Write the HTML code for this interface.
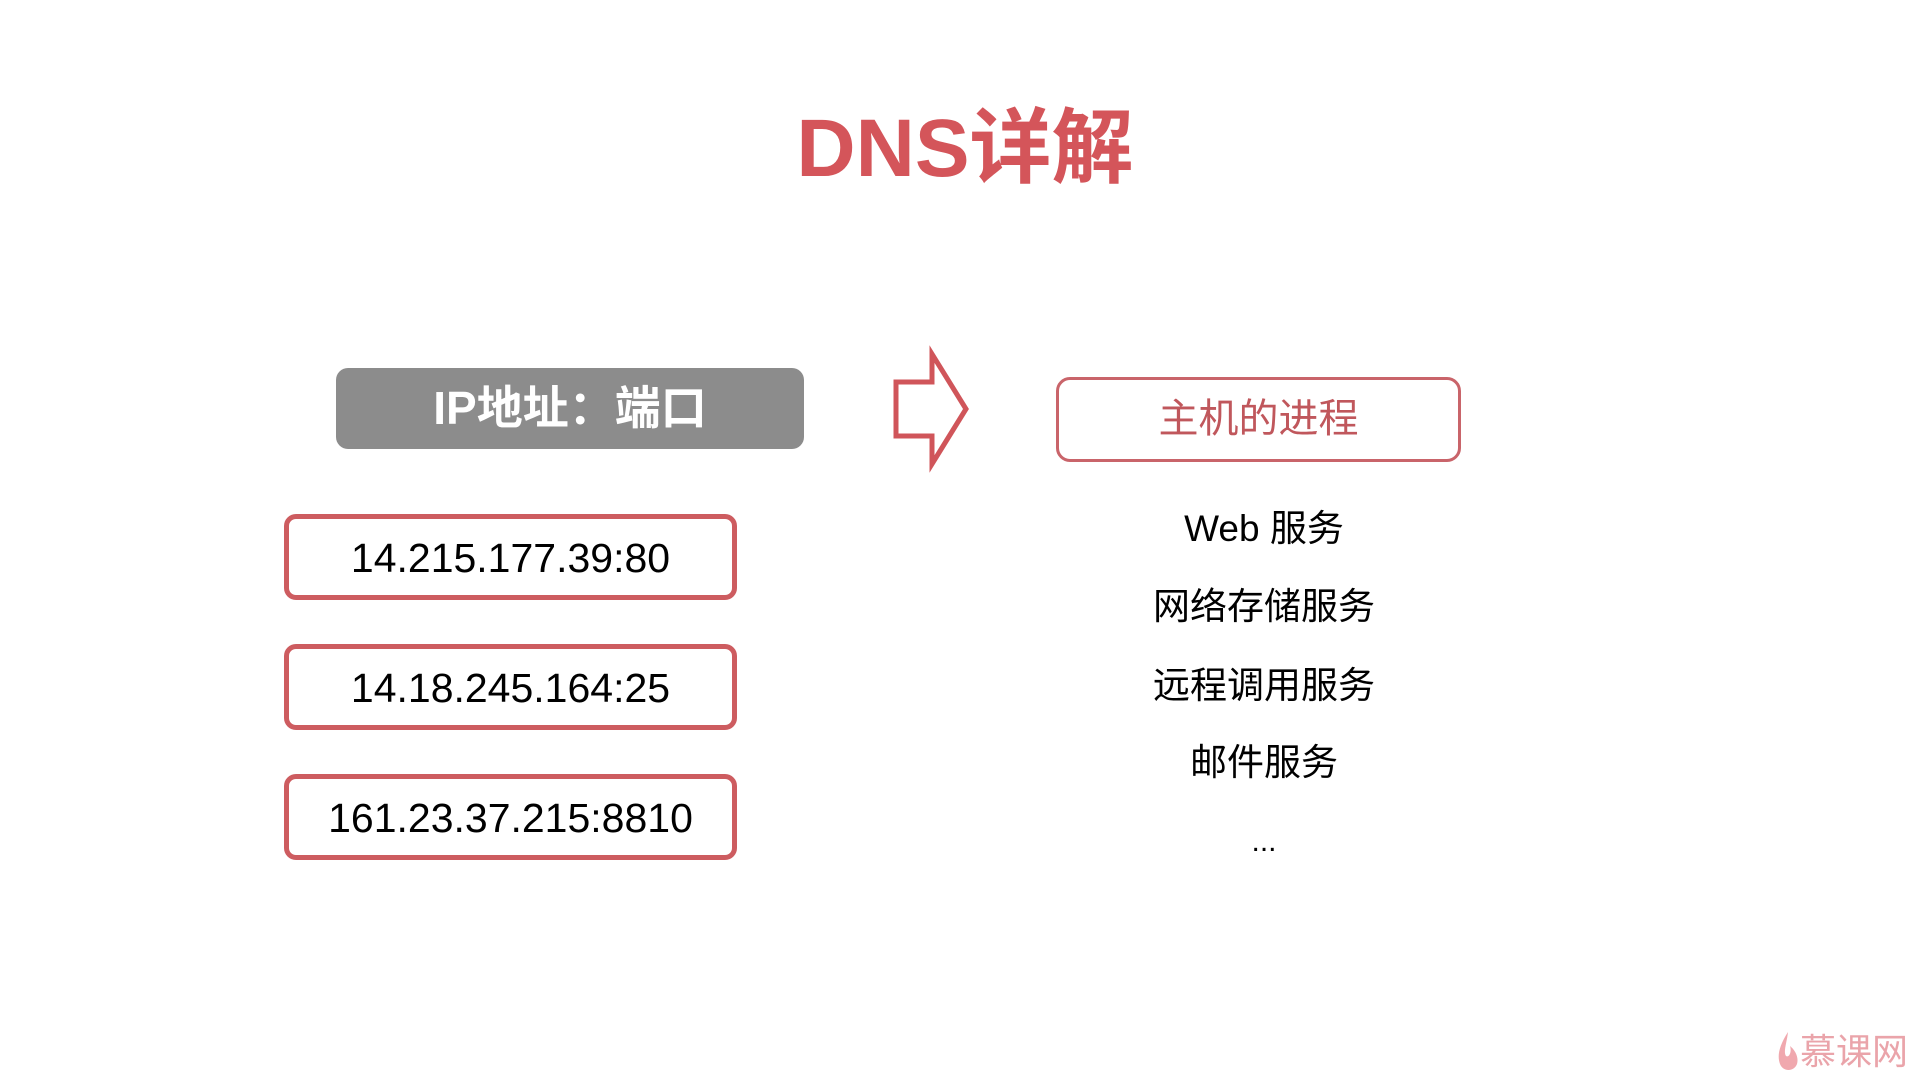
<!DOCTYPE html>
<html><head><meta charset="utf-8"><style>
body{margin:0;width:1920px;height:1080px;background:#fff;position:relative;overflow:hidden;font-family:"Liberation Sans","Noto Sans CJK SC",sans-serif}
.a{position:absolute;box-sizing:border-box}
</style></head><body>
<div class="a" style="left:780px;top:94px;width:370px;height:110px;text-align:center;font-size:82px;font-weight:bold;color:#d4555a;line-height:110px">DNS详解</div>
<div class="a" style="left:336px;top:368px;width:468px;height:81px;background:#8c8c8c;border-radius:12px;color:#fff;font-weight:bold;font-size:46px;text-align:center;line-height:81px">IP地址：端口</div>
<svg class="a" style="left:880px;top:340px" width="100" height="140"><path d="M16 42 H52 V14 L86 69 L52 124 V96 H16 Z" fill="none" stroke="#d0555a" stroke-width="5"/></svg>
<div class="a" style="left:1056px;top:377px;width:405px;height:85px;border:3px solid #c9646a;border-radius:14px;color:#c0575c;font-size:40px;text-align:center;line-height:79px">主机的进程</div>
<div class="a" style="left:284px;top:514px;width:453px;height:86px;border:5px solid #cd5c60;border-radius:12px;font-size:41px;text-align:center;line-height:78px">14.215.177.39:80</div>
<div class="a" style="left:284px;top:644px;width:453px;height:86px;border:5px solid #cd5c60;border-radius:12px;font-size:41px;text-align:center;line-height:78px">14.18.245.164:25</div>
<div class="a" style="left:284px;top:774px;width:453px;height:86px;border:5px solid #cd5c60;border-radius:12px;font-size:41px;text-align:center;line-height:78px">161.23.37.215:8810</div>
<div class="a" style="left:1064px;top:505px;width:400px;text-align:center;font-size:37px;line-height:48px">Web 服务</div>
<div class="a" style="left:1064px;top:583px;width:400px;text-align:center;font-size:37px;line-height:48px">网络存储服务</div>
<div class="a" style="left:1064px;top:662px;width:400px;text-align:center;font-size:37px;line-height:48px">远程调用服务</div>
<div class="a" style="left:1064px;top:739px;width:400px;text-align:center;font-size:37px;line-height:48px">邮件服务</div>
<div class="a" style="left:1064px;top:818px;width:400px;text-align:center;font-size:30px;line-height:48px">...</div>
<svg class="a" style="left:1775px;top:1030px" width="26" height="44"><path d="M13 2 C4 16 2 26 5 34 C8 42 19 42 22 34 C24 27 20 20 15 16 C17 22 14 28 11 26 C8 22 12 12 13 2Z" fill="#f0a8ae"/></svg>
<div class="a" style="left:1800px;top:1030px;font-size:36px;line-height:44px;color:#eaa4aa">慕课网</div>
</body></html>
